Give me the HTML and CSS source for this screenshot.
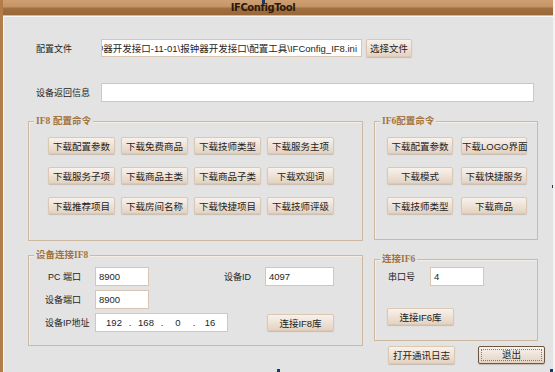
FILE: index.html
```html
<!DOCTYPE html>
<html lang="zh-CN">
<head>
    <meta charset="UTF-8">
    <meta name="viewport" content="width=device-width, initial-scale=1.0">
    <title>IFConfigTool</title>
    <link rel="stylesheet" href="styles.css">
</head>
<body>
    <div class="window">
        <div class="titlebar">IFConfigTool</div>
        <div class="client">
            <div class="form-row">
                <label class="form-label">配置文件</label>
                <div class="text-input file-input"><span>钟器开发接口-11-01\报钟器开发接口\配置工具\IFConfig_IF8.ini</span></div>
                <button class="btn pick-btn">选择文件</button>
            </div>
            <div class="form-row info-row">
                <label class="form-label">设备返回信息</label>
                <div class="text-input info-input"></div>
            </div>

            <div class="panels top-panels">
                <div class="group if8-cmd">
                    <span class="group-title"><span class="latin">IF8</span> 配置命令</span>
                    <div class="cmd-grid grid4">
                        <button class="btn">下载配置参数</button>
                        <button class="btn">下载免费商品</button>
                        <button class="btn">下载技师类型</button>
                        <button class="btn">下载服务主项</button>
                        <button class="btn">下载服务子项</button>
                        <button class="btn">下载商品主类</button>
                        <button class="btn">下载商品子类</button>
                        <button class="btn">下载欢迎词</button>
                        <button class="btn">下载推荐项目</button>
                        <button class="btn">下载房间名称</button>
                        <button class="btn">下载快捷项目</button>
                        <button class="btn">下载技师评级</button>
                    </div>
                </div>
                <div class="group if6-cmd">
                    <span class="group-title"><span class="latin">IF6</span>配置命令</span>
                    <div class="cmd-grid grid2">
                        <button class="btn">下载配置参数</button>
                        <button class="btn">下载LOGO界面</button>
                        <button class="btn">下载模式</button>
                        <button class="btn">下载快捷服务</button>
                        <button class="btn">下载技师类型</button>
                        <button class="btn">下载商品</button>
                    </div>
                </div>
            </div>

            <div class="panels bottom-panels">
                <div class="group if8-conn">
                    <span class="group-title">设备连接<span class="latin">IF8</span></span>
                    <div class="conn-row">
                        <label class="conn-label pc-label">PC 端口</label>
                        <div class="text-input port-input">8900</div>
                        <label class="conn-label id-label">设备ID</label>
                        <div class="text-input id-input">4097</div>
                    </div>
                    <div class="conn-row">
                        <label class="conn-label">设备端口</label>
                        <div class="text-input port-input">8900</div>
                    </div>
                    <div class="conn-row">
                        <label class="conn-label">设备IP地址</label>
                        <div class="text-input ip-input">
                            <span class="ip-part">192</span><span class="ip-dot">.</span>
                            <span class="ip-part">168</span><span class="ip-dot">.</span>
                            <span class="ip-part">0</span><span class="ip-dot">.</span>
                            <span class="ip-part">16</span>
                        </div>
                        <button class="btn connect-btn">连接IF8库</button>
                    </div>
                </div>
                <div class="right-col">
                    <div class="group if6-conn">
                        <span class="group-title">连接<span class="latin">IF6</span></span>
                        <div class="conn-row">
                            <label class="conn-label com-label">串口号</label>
                            <div class="text-input port-input">4</div>
                        </div>
                        <button class="btn connect-btn if6-btn">连接IF6库</button>
                    </div>
                    <div class="footer-btns">
                        <button class="btn footer-btn">打开通讯日志</button>
                        <button class="btn footer-btn default-btn"><span>退出</span></button>
                    </div>
                </div>
            </div>
        </div>

        <!-- designer selection handles -->
        <span class="handle h-tl"></span>
        <span class="handle h-tm"></span>
        <span class="handle h-ml"></span>
        <span class="handle h-mr"></span>
        <span class="handle h-bl"></span>
        <span class="handle h-bm"></span>
        <span class="handle h-br"></span>
    </div>
</body>
</html>
```

FILE: styles.css
```css
* {
    box-sizing: border-box;
}
body {
    margin: 0;
    font-family: "Liberation Sans", "Noto Sans CJK SC", sans-serif;
    font-size: 9px;
    color: #1e1e1e;
    background: #e3e3e3;
}
.window {
    position: relative;
    width: 555px;
    height: 372px;
    display: flex;
    flex-direction: column;
    border-left: 3px solid #b27d48;
    border-right: 2px solid #f2f2f2;
    overflow: hidden;
}
.titlebar {
    height: 16px;
    line-height: 16px;
    padding-right: 30px;
    text-align: center;
    font-family: "DejaVu Sans", sans-serif;
    font-weight: bold;
    font-size: 10px;
    letter-spacing: -0.4px;
    color: #2b1a0a;
    background: linear-gradient(#cd9f72 0%, #c49466 48%, #a27042 52%, #986839 100%);
    border-bottom: 1px solid #dcb893;
}
.client {
    flex: 1;
    padding: 22px 0 0 24px;
    border-top: 1px solid #f7f7f7;
    border-left: 1px solid #f7f7f7;
}
.form-row {
    display: flex;
    align-items: center;
    padding-left: 8px;
}
.form-label {
    width: 65px;
}
.text-input {
    background: #fff;
    border: 1px solid #d8c6b3;
    height: 19px;
    line-height: 17px;
    padding: 0 3px;
    font-size: 9.5px;
    white-space: nowrap;
    overflow: hidden;
}
.file-input {
    width: 261px;
    height: 18px;
    display: flex;
    justify-content: flex-end;
    padding: 0 4px 0 2px;
}
.info-row {
    margin-top: 26px;
}
.info-input {
    width: 433px;
}
.btn {
    height: 17px;
    padding: 0;
    font-family: inherit;
    font-size: 9.5px;
    color: #1e1e1e;
    text-align: center;
    white-space: nowrap;
    border: 1px solid #dac8b5;
    border-radius: 2px;
    background: linear-gradient(#f8f2ec, #e4d3c2);
    box-shadow: 0 1px 1px rgba(150, 115, 80, 0.35);
}
.pick-btn {
    width: 46px;
    height: 18px;
    margin-left: 4px;
}
.panels {
    display: flex;
    gap: 11px;
}
.top-panels {
    margin-top: 19px;
}
.group {
    position: relative;
    border: 1px solid #cdb8a2;
    box-shadow: inset 1px 1px 0 #f3ede6;
}
.group-title {
    position: absolute;
    top: -7px;
    left: 5px;
    padding: 0 2px;
    line-height: 12px;
    font-size: 9.5px;
    font-weight: bold;
    color: #a3733f;
    background: #e3e3e3;
}
.latin {
    font-family: "Liberation Serif", serif;
    font-size: 9.5px;
}
.if8-cmd {
    width: 335px;
    height: 120px;
}
.if6-cmd {
    width: 164px;
    height: 119px;
}
.cmd-grid {
    display: grid;
    row-gap: 13px;
    padding-top: 15px;
}
.grid4 {
    grid-template-columns: repeat(4, 67px);
    column-gap: 6px;
    padding-left: 19px;
}
.grid2 {
    grid-template-columns: repeat(2, 66px);
    column-gap: 8px;
    padding-left: 12px;
}
.bottom-panels {
    margin-top: 14px;
}
.if8-conn {
    width: 335px;
    height: 91px;
    padding: 11px 0 0 16px;
    display: flex;
    flex-direction: column;
    gap: 4px;
}
.conn-row {
    display: flex;
    align-items: center;
    height: 19px;
}
.conn-label {
    width: 50px;
}
.pc-label {
    padding-left: 3px;
}
.port-input {
    width: 54px;
}
.id-label {
    width: 41px;
    margin-left: 75px;
}
.id-input {
    width: 69px;
}
.ip-input {
    width: 133px;
    display: flex;
    padding-left: 5px;
}
.ip-part {
    width: 26px;
    text-align: center;
}
.ip-dot {
    width: 6px;
    text-align: center;
}
.connect-btn {
    width: 67px;
    margin-left: 39px;
}
.right-col {
    width: 164px;
    margin-top: 4px;
    display: flex;
    flex-direction: column;
}
.if6-conn {
    height: 82px;
    padding: 7px 0 0 12px;
}
.com-label {
    width: 43px;
    padding-left: 1px;
}
.if6-btn {
    display: block;
    margin: 22px 0 0 0;
}
.footer-btns {
    display: flex;
    gap: 23px;
    margin-top: 5px;
    padding-left: 14px;
    width: 180px;
}
.footer-btn {
    width: 67px;
    height: 18px;
    flex-shrink: 0;
}
.default-btn {
    border-color: #6a5645;
    padding: 2px;
}
.default-btn span {
    display: block;
    height: 12px;
    line-height: 10px;
    border: 1px dotted #8a7a6a;
}
.handle {
    position: absolute;
    width: 3px;
    height: 3px;
    background: #1f3766;
}
.h-tl { top: 0; left: -3px; }
.h-tm { top: 0; left: 259px; }
.h-ml { top: 185px; left: -3px; }
.h-mr { top: 185px; right: -2px; }
.h-bl { bottom: 0; left: -3px; }
.h-bm { bottom: 0; left: 274px; }
.h-br { bottom: 0; right: 0; }
```
